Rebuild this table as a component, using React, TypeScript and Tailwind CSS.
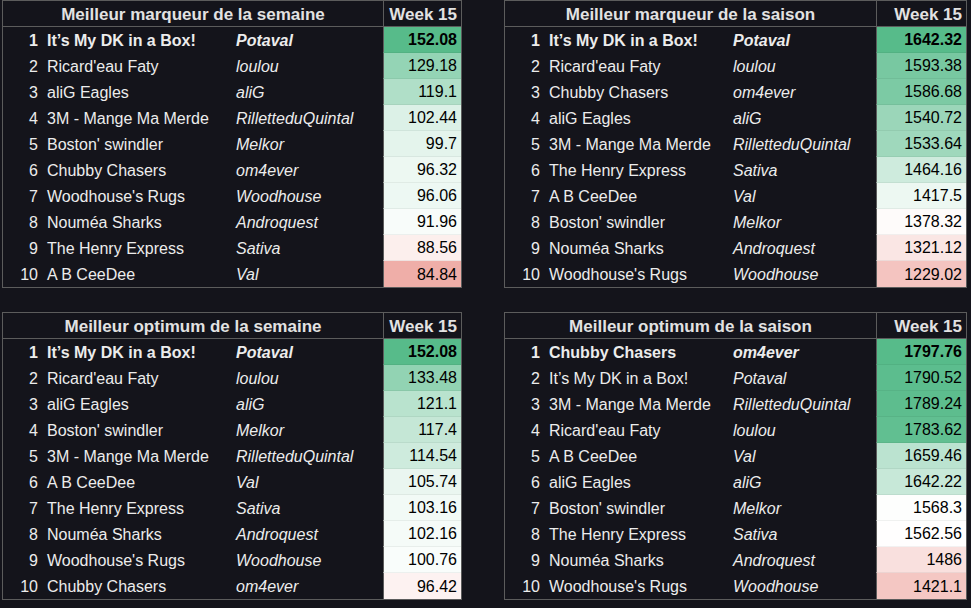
import React from "react";

type Row = [string, string, number];
type Params = { min: number; mid: number; max: number };

const G = [87, 187, 138];
const R = [230, 124, 115];

function cellColor(v: number, p: Params): string {
  let f: number;
  let c: number[];
  if (v >= p.mid) {
    f = Math.min(1, (v - p.mid) / (p.max - p.mid));
    c = G;
  } else {
    f = Math.min(1, (p.mid - v) / (p.mid - p.min));
    c = R;
  }
  const mix = c.map((x) => Math.round(255 + (x - 255) * f));
  return `rgb(${mix[0]},${mix[1]},${mix[2]})`;
}

function Table({
  title,
  rows,
  grid,
  params,
}: {
  title: string;
  rows: Row[];
  grid: string;
  params: Params;
}) {
  return (
    <div className="border border-[#5c5c5c] text-[#ececec]">
      <div className={`grid ${grid} h-[26px] border-b border-[#5c5c5c]`}>
        <div className="col-span-3 flex items-center justify-center pt-[1px] text-[17px] font-bold text-[#e2e2e2]">
          {title}
        </div>
        <div className="flex items-center justify-end border-l border-[#5c5c5c] pr-[4px] pt-[1px] text-[17px] font-bold text-[#e2e2e2]">
          Week 15
        </div>
      </div>
      {rows.map((r, i) => {
        const bold = i === 0;
        const last = i === rows.length - 1;
        return (
          <div key={i} className={`grid ${grid} h-[26px] text-[16px]`}>
            <div
              className={`flex items-center justify-end pr-[4px] pt-[1px] ${bold ? "font-bold" : ""}`}
            >
              {i + 1}
            </div>
            <div
              className={`flex items-center pl-[5px] pt-[1px] whitespace-nowrap ${bold ? "font-bold" : ""}`}
            >
              {r[0]}
            </div>
            <div
              className={`flex items-center pl-[4px] pt-[1px] italic whitespace-nowrap ${bold ? "font-bold" : ""}`}
            >
              {r[1]}
            </div>
            <div
              className={`flex items-center justify-end border-l border-[#5c5c5c] pr-[4px] pt-[1px] text-black ${last ? "" : "border-b border-b-black/5"} ${bold ? "font-bold" : ""}`}
              style={{ backgroundColor: cellColor(r[2], params) }}
            >
              {r[2]}
            </div>
          </div>
        );
      })}
    </div>
  );
}

const TL: Row[] = [
  ["It’s My DK in a Box!", "Potaval", 152.08],
  ["Ricard'eau Faty", "loulou", 129.18],
  ["aliG Eagles", "aliG", 119.1],
  ["3M - Mange Ma Merde", "RilletteduQuintal", 102.44],
  ["Boston' swindler", "Melkor", 99.7],
  ["Chubby Chasers", "om4ever", 96.32],
  ["Woodhouse's Rugs", "Woodhouse", 96.06],
  ["Nouméa Sharks", "Androquest", 91.96],
  ["The Henry Express", "Sativa", 88.56],
  ["A B CeeDee", "Val", 84.84],
];

const TR: Row[] = [
  ["It’s My DK in a Box!", "Potaval", 1642.32],
  ["Ricard'eau Faty", "loulou", 1593.38],
  ["Chubby Chasers", "om4ever", 1586.68],
  ["aliG Eagles", "aliG", 1540.72],
  ["3M - Mange Ma Merde", "RilletteduQuintal", 1533.64],
  ["The Henry Express", "Sativa", 1464.16],
  ["A B CeeDee", "Val", 1417.5],
  ["Boston' swindler", "Melkor", 1378.32],
  ["Nouméa Sharks", "Androquest", 1321.12],
  ["Woodhouse's Rugs", "Woodhouse", 1229.02],
];

const BL: Row[] = [
  ["It’s My DK in a Box!", "Potaval", 152.08],
  ["Ricard'eau Faty", "loulou", 133.48],
  ["aliG Eagles", "aliG", 121.1],
  ["Boston' swindler", "Melkor", 117.4],
  ["3M - Mange Ma Merde", "RilletteduQuintal", 114.54],
  ["A B CeeDee", "Val", 105.74],
  ["The Henry Express", "Sativa", 103.16],
  ["Nouméa Sharks", "Androquest", 102.16],
  ["Woodhouse's Rugs", "Woodhouse", 100.76],
  ["Chubby Chasers", "om4ever", 96.42],
];

const BR: Row[] = [
  ["Chubby Chasers", "om4ever", 1797.76],
  ["It’s My DK in a Box!", "Potaval", 1790.52],
  ["3M - Mange Ma Merde", "RilletteduQuintal", 1789.24],
  ["Ricard'eau Faty", "loulou", 1783.62],
  ["A B CeeDee", "Val", 1659.46],
  ["aliG Eagles", "aliG", 1642.22],
  ["Boston' swindler", "Melkor", 1568.3],
  ["The Henry Express", "Sativa", 1562.56],
  ["Nouméa Sharks", "Androquest", 1486],
  ["Woodhouse's Rugs", "Woodhouse", 1421.1],
];

const LEFT = "grid-cols-[39px_190px_151px_78px]";
const RIGHT = "grid-cols-[39px_185px_147px_90px]";

export default function App() {
  return (
    <div className="min-h-screen w-full bg-[#14141b] pl-[2px] font-['Liberation_Sans',Arial,sans-serif]">
      <div className="flex flex-col gap-[24px]">
        <div className="flex gap-[42px]">
          <div className="w-[460px]">
            <Table
              title="Meilleur marqueur de la semaine"
              rows={TL}
              grid={LEFT}
              params={{ min: 82, mid: 89.5, max: 152.08 }}
            />
          </div>
          <div className="w-[463px]">
            <Table
              title="Meilleur marqueur de la saison"
              rows={TR}
              grid={RIGHT}
              params={{ min: 1032, mid: 1390, max: 1642.32 }}
            />
          </div>
        </div>
        <div className="flex gap-[42px]">
          <div className="w-[460px]">
            <Table
              title="Meilleur optimum de la semaine"
              rows={BL}
              grid={LEFT}
              params={{ min: 73, mid: 99, max: 152.08 }}
            />
          </div>
          <div className="w-[463px]">
            <Table
              title="Meilleur optimum de la saison"
              rows={BR}
              grid={RIGHT}
              params={{ min: 1230, mid: 1565, max: 1797.76 }}
            />
          </div>
        </div>
      </div>
    </div>
  );
}
